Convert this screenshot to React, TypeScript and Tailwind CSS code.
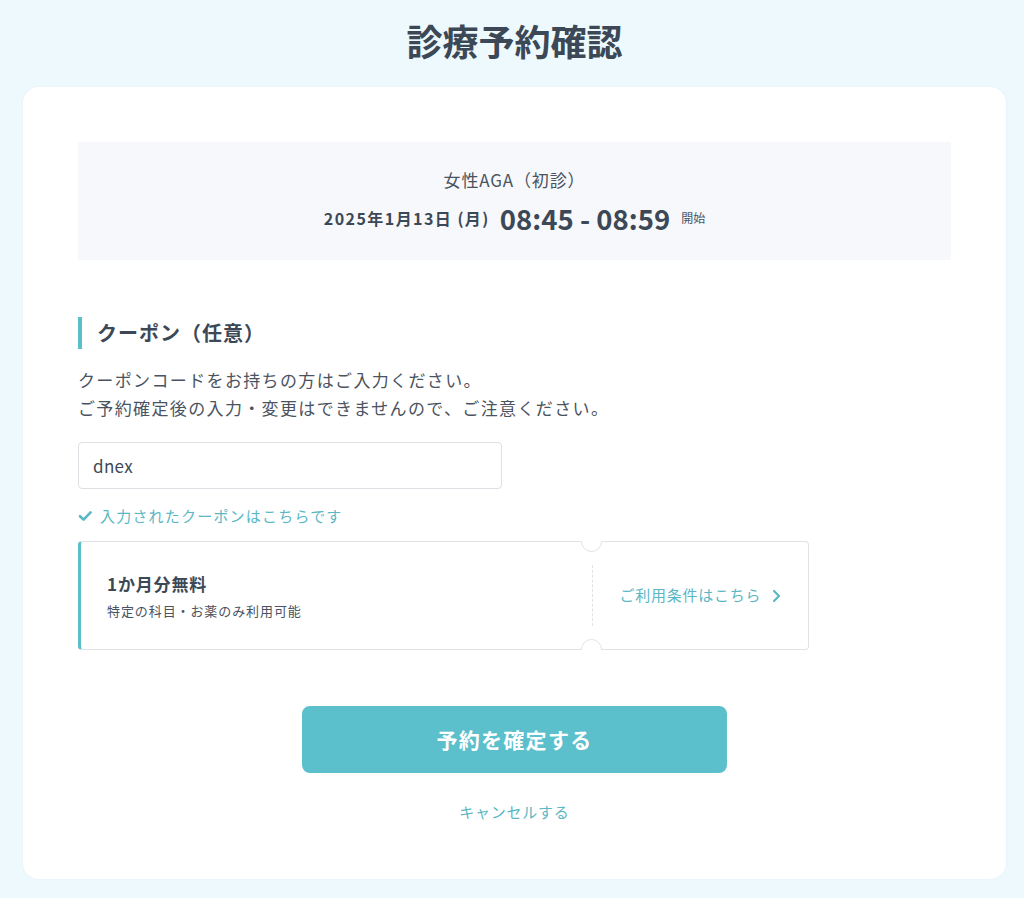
import React from "react";

export default function App() {
  return (
    <div
      className="min-h-[898px] w-full bg-[#eef9fd] pt-[13px] pb-[19px] text-[#3c4856] tracking-[0.05em] [text-spacing-trim:space-all]"
      style={{ fontFamily: '"Noto Sans CJK JP", "Noto Sans", sans-serif' }}
    >
      <div className="ml-[23px] w-[983px]">
        <h1 className="text-center text-[36px] font-bold leading-[54px] tracking-normal text-[#3c4856]">
          診療予約確認
        </h1>
        <div className="mt-[20px] rounded-[16px] bg-white px-[55px] pt-[55px] pb-[55px] shadow-[0_0_3px_rgba(0,0,0,0.04)]">
          <div className="bg-[#f6f8fb] pt-[26px] pb-[24px] text-center">
            <div className="text-[17px] leading-[24px] tracking-[0.05em] text-[#4a5361]">女性AGA（初診）</div>
            <div className="mt-[8px] flex items-center justify-center leading-[36px]">
              <span className="text-[16px] font-bold tracking-[0.09em] text-[#3c4856]">2025年1月13日 (月)</span>
              <span className="ml-[10px] text-[27.5px] font-bold tracking-normal text-[#3c4856]">08:45 - 08:59</span>
              <span className="ml-[11px] text-[12px] tracking-normal text-[#4a5361]">開始</span>
            </div>
          </div>

          <h2 className="mt-[57px] border-l-4 border-[#5bbfcb] pl-[15px] text-[20px] font-bold leading-[32px] tracking-[0.05em] text-[#3c4856]">
            クーポン（任意）
          </h2>
          <p className="mt-[17px] text-[17px] leading-[28px] tracking-[0.08em] text-[#4a5361]">
            クーポンコードをお持ちの方はご入力ください。
            <br />
            ご予約確定後の入力・変更はできませんので、ご注意ください。
          </p>

          <div className="mt-[20px] flex h-[47px] w-[424px] items-center rounded-[4px] border border-[#dde1e5] px-[14px] text-[17px] tracking-[0.02em] text-[#3c4856]">
            dnex
          </div>

          <div className="mt-[17px] flex items-center gap-[7px] text-[15px] leading-[20px] tracking-[0.08em] text-[#5bb7c4]">
            <svg width="15" height="14" viewBox="0 0 15 14" fill="none">
              <path d="M2 7.2 L5.6 10.6 L12.6 3.4" stroke="#5bb7c4" strokeWidth="2.6" strokeLinecap="round" strokeLinejoin="round" />
            </svg>
            <span>入力されたクーポンはこちらです</span>
          </div>

          <div className="relative mt-[15px] flex h-[109px] w-[731px] rounded-[4px] border border-l-[3px] border-[#dfe2e6] border-l-[#5bbfcb]">
            <div className="flex w-[511px] flex-col justify-center pl-[26px]">
              <div className="text-[17px] font-bold leading-[24px] tracking-[0.05em] text-[#3c4856]">1か月分無料</div>
              <div className="mt-[6px] text-[13px] leading-[18px] tracking-[0.07em] text-[#4a5361]">特定の科目・お薬のみ利用可能</div>
            </div>
            <div className="my-[23px] border-l border-dashed border-[#dfe2e6]" />
            <div className="flex flex-1 items-center justify-center gap-[10px] text-[15px] tracking-[0.05em] text-[#5bb7c4]">
              <span>ご利用条件はこちら</span>
              <svg width="10" height="14" viewBox="0 0 10 14" fill="none">
                <path d="M3 2 L8 7 L3 12" stroke="#5bb7c4" strokeWidth="2.2" strokeLinecap="round" strokeLinejoin="round" />
              </svg>
            </div>
            <div className="absolute left-[500px] top-[-11px] h-[21px] w-[21px] rounded-full border border-[#dfe2e6] bg-white [clip-path:inset(10px_0_0_0)]" />
            <div className="absolute left-[500px] bottom-[-11px] h-[21px] w-[21px] rounded-full border border-[#dfe2e6] bg-white [clip-path:inset(0_0_10px_0)]" />
          </div>

          <div className="mt-[56px] flex justify-center">
            <button className="h-[67px] w-[425px] rounded-[8px] bg-[#5bc0cc] text-[21px] font-bold tracking-[0.06em] text-white">
              予約を確定する
            </button>
          </div>
          <div className="mt-[27px] text-center text-[15px] leading-[24px] tracking-[0.05em] text-[#5bb7c4]">キャンセルする</div>
        </div>
      </div>
    </div>
  );
}
